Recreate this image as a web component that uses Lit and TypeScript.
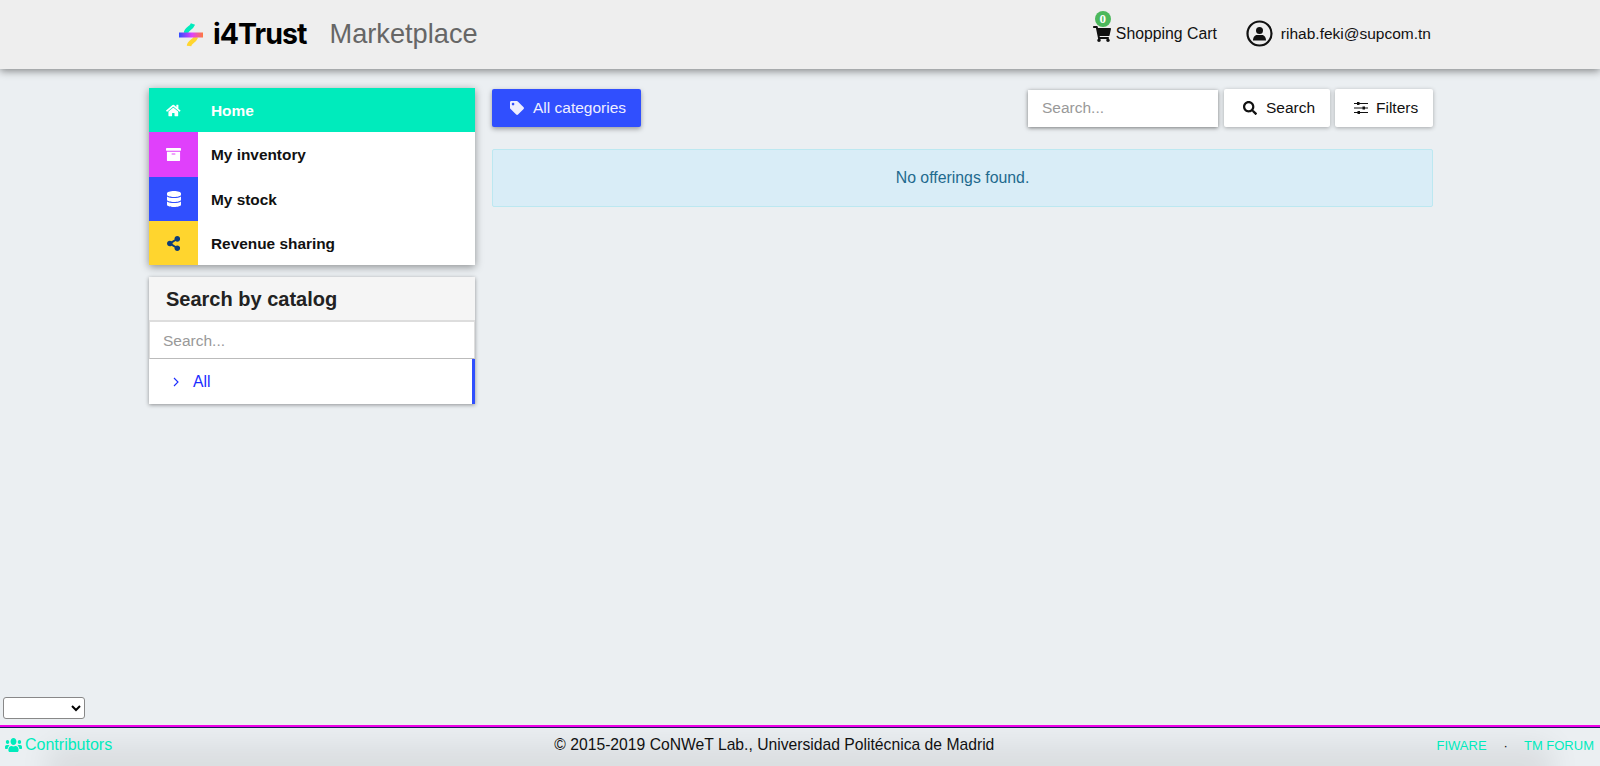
import { LitElement, html, css, svg } from 'lit';
import { customElement } from 'lit/decorators.js';

// font awesome shapes, drawn inline
const icon = (w: number, d: string, cls = "") => html`<svg class="icon ${cls}" viewBox="0 0 ${w} 512"><path fill="currentColor" d="${d}"></path></svg>`;

const HOME = "M280.37 148.26L96 300.11V464a16 16 0 0 0 16 16l112.06-.29a16 16 0 0 0 15.92-16V368a16 16 0 0 1 16-16h64a16 16 0 0 1 16 16v95.64a16 16 0 0 0 16 16.05L464 480a16 16 0 0 0 16-16V300L295.67 148.26a12.19 12.19 0 0 0-15.3 0zM571.6 251.47L488 182.56V44.05a12 12 0 0 0-12-12h-56a12 12 0 0 0-12 12v72.61L318.47 43a48 48 0 0 0-61 0L4.34 251.47a12 12 0 0 0-1.6 16.9l25.5 31A12 12 0 0 0 45.15 301l235.22-193.74a12.19 12.19 0 0 1 15.3 0L530.9 301a12 12 0 0 0 16.9-1.6l25.5-31a12 12 0 0 0-1.7-16.93z";
const ARCHIVE = "M32 448c0 17.7 14.3 32 32 32h384c17.7 0 32-14.3 32-32V160H32v288zm160-212c0-6.6 5.4-12 12-12h104c6.6 0 12 5.4 12 12v8c0 6.6-5.4 12-12 12H204c-6.6 0-12-5.4-12-12v-8zM480 32H32C14.3 32 0 46.3 0 64v48c0 8.8 7.2 16 16 16h480c8.8 0 16-7.2 16-16V64c0-17.7-14.3-32-32-32z";
const DATABASE = "M448 73.143v45.714C448 159.143 347.667 192 224 192S0 159.143 0 118.857V73.143C0 32.857 100.333 0 224 0s224 32.857 224 73.143zM448 176v102.857C448 319.143 347.667 352 224 352S0 319.143 0 278.857V176c48.125 33.143 136.208 48.572 224 48.572S399.874 209.143 448 176zm0 160v102.857C448 479.143 347.667 512 224 512S0 479.143 0 438.857V336c48.125 33.143 136.208 48.572 224 48.572S399.874 369.143 448 336z";
const SHARE = "M352 320c-22.608 0-43.387 7.819-59.79 20.895l-102.486-64.054a96.551 96.551 0 0 0 0-41.683l102.486-64.054C308.613 184.181 329.392 192 352 192c53.019 0 96-42.981 96-96S405.019 0 352 0s-96 42.981-96 96c0 7.158.79 14.13 2.276 20.841L155.79 180.895C139.387 167.819 118.608 160 96 160c-53.019 0-96 42.981-96 96s42.981 96 96 96c22.608 0 43.387-7.819 59.79-20.895l102.486 64.054A96.301 96.301 0 0 0 256 416c0 53.019 42.981 96 96 96s96-42.981 96-96-42.981-96-96-96z";
const TAG = "M0 252.118V48C0 21.49 21.49 0 48 0h204.118a48 48 0 0 1 33.941 14.059l211.882 211.882c18.745 18.745 18.745 49.137 0 67.882L293.823 497.941c-18.745 18.745-49.137 18.745-67.882 0L14.059 286.059A48 48 0 0 1 0 252.118zM112 64c-26.51 0-48 21.49-48 48s21.49 48 48 48 48-21.49 48-48-21.49-48-48-48z";
const SEARCH = "M505 442.7L405.3 343c-4.5-4.5-10.6-7-17-7H372c27.6-35.3 44-79.7 44-128C416 93.1 322.9 0 208 0S0 93.1 0 208s93.1 208 208 208c48.3 0 92.7-16.4 128-44v16.3c0 6.4 2.5 12.5 7 17l99.7 99.7c9.4 9.4 24.6 9.4 33.9 0l28.3-28.3c9.4-9.4 9.4-24.6.1-34zM208 336c-70.7 0-128-57.2-128-128 0-70.7 57.2-128 128-128 70.7 0 128 57.2 128 128 0 70.7-57.2 128-128 128z";
const CART = "M528.12 301.319l47.273-208C578.806 78.301 567.391 64 551.99 64H159.208l-9.166-44.81C147.758 8.021 137.93 0 126.529 0H24C10.745 0 0 10.745 0 24v16c0 13.255 10.745 24 24 24h69.883l70.248 343.435C147.325 417.1 136 435.222 136 456c0 30.928 25.072 56 56 56s56-25.072 56-56c0-15.674-6.447-29.835-16.824-40h209.647C430.447 426.165 424 440.326 424 456c0 30.928 25.072 56 56 56s56-25.072 56-56c0-22.172-12.888-41.332-31.579-50.405l5.517-24.276c3.413-15.018-8.002-29.319-23.403-29.319H218.117l-6.545-32h293.145c11.206 0 20.92-7.754 23.403-18.681z";
const USERS = "M96 224c35.3 0 64-28.7 64-64s-28.7-64-64-64-64 28.7-64 64 28.7 64 64 64zm448 0c35.3 0 64-28.7 64-64s-28.7-64-64-64-64 28.7-64 64 28.7 64 64 64zm32 32h-64c-17.6 0-33.5 7.1-45.1 18.6 40.3 22.1 68.9 62 75.1 109.4h66c17.7 0 32-14.3 32-32v-32c0-35.3-28.7-64-64-64zm-256 0c61.9 0 112-50.1 112-112S381.9 32 320 32 208 82.1 208 144s50.1 112 112 112zm76.8 32h-8.3c-20.8 10-43.9 16-68.5 16s-47.6-6-68.5-16h-8.3C179.6 288 128 339.6 128 403.2V432c0 26.5 21.5 48 48 48h288c26.5 0 48-21.5 48-48v-28.8c0-63.6-51.6-115.2-115.2-115.2zm-223.7-13.4C161.5 263.1 145.6 256 128 256H64c-35.3 0-64 28.7-64 64v32c0 17.7 14.3 32 32 32h65.9c6.3-47.4 34.9-87.3 75.2-109.4z";

const logo = html`<svg class="logo" viewBox="0 0 26 26">
  <defs>
    <linearGradient id="bar" x1="0" x2="1" y1="0" y2="0">
      <stop offset="0" stop-color="#2f4dff"></stop>
      <stop offset="0.55" stop-color="#e040fb"></stop>
      <stop offset="1" stop-color="#ff7a3c"></stop>
    </linearGradient>
  </defs>
  ${svg`<path d="M8 11 C8.5 6 13 7 15 2" fill="none" stroke="#00ebbc" stroke-width="4.5" stroke-linecap="butt"></path>
  <path d="M11 24 C11.5 19 16 20 18 15" fill="none" stroke="#ffd52e" stroke-width="4.5" stroke-linecap="butt"></path>
  <rect x="1" y="10.5" width="24" height="5" fill="url(#bar)"></rect>`}
</svg>`;

@customElement('app-root')
export default class AppRoot extends LitElement {

    static styles = css`
    :host{
        display: flex;
        flex-direction: column;
        height: 766px;
        overflow: hidden;
        background-color: #ebeff2;
        font-family: "Liberation Sans", Arial, sans-serif;
        color: #000;
    }
    .icon{
        display: block;
        height: 1em;
        flex: none;
    }

    .header{
        flex: none;
        height: 69px;
        box-sizing: border-box;
        background-color: #eee;
        box-shadow: 0 2px 8px rgba(0,0,0,.45);
        display: flex;
        align-items: center;
        padding: 0 169px 2px 178px;
        position: relative;
    }
    .logo{
        width: 26px;
        height: 26px;
        margin: 2px 9px 0 0;
    }
    .brand{
        font-family: Inter, "Liberation Sans", sans-serif;
        font-size: 28.5px;
        font-weight: 700;
        letter-spacing: -.95px;
        margin-right: 23px;
    }
    .title{
        font-size: 27.2px;
        color: #666;
    }
    .header__right{
        margin-left: auto;
        display: flex;
        align-items: center;
        font-size: 15.5px;
        color: #111;
    }
    .cart{
        display: flex;
        align-items: center;
        position: relative;
        margin-right: 29px;
        font-size: 15.8px;
    }
    .cart .icon{
        font-size: 16px;
        margin-right: 5px;
    }
    .badge{
        position: absolute;
        left: 2px;
        top: -14px;
        width: 16px;
        height: 16px;
        border-radius: 50%;
        background-color: #4cb85c;
        color: #fff;
        font: bold 13px/16px "Liberation Serif", serif;
        text-align: center;
    }
    .user{
        display: flex;
        align-items: center;
        gap: 8px;
    }
    .user svg{
        width: 27px;
        height: 27px;
    }

    .main{
        flex: 1;
        min-height: 0;
        display: flex;
        gap: 17px;
        width: 1284px;
        padding-top: 19px;
        margin-left: 149px;
    }
    .side{
        flex: none;
        width: 326px;
    }
    .menu{
        background-color: #fff;
        box-shadow: 0 2px 8px rgba(0,0,0,.4);
        margin-bottom: 12px;
    }
    .menu__row{
        display: flex;
        align-items: center;
        height: 44.33px;
        font-size: 15.4px;
        font-weight: 700;
        color: #111;
    }
    .menu__row.active{
        background-color: #00ebbc;
        color: #fff;
    }
    .menu__label{
        padding-top: 2px;
    }
    .menu__icon{
        flex: none;
        width: 49px;
        height: 100%;
        display: flex;
        align-items: center;
        justify-content: center;
        margin-right: 13px;
        font-size: 15px;
        color: #fff;
    }
    .home{ background-color: #00ebbc; font-size: 13px; }
    .inventory{ background-color: #e040fb; }
    .stock{ background-color: #304ffe; font-size: 16px; }
    .revenue{ background-color: #ffd52e; color: #0d3c78; }

    .catalog{
        background-color: #fff;
        box-shadow: 0 1px 4px rgba(0,0,0,.4);
    }
    .catalog__title{
        height: 44px;
        box-sizing: border-box;
        padding: 2px 0 0 17px;
        display: flex;
        align-items: center;
        background-color: #f5f5f5;
        border-bottom: 1px solid #ddd;
        font-size: 20px;
        font-weight: 700;
        color: #222;
    }
    .catalog__search{
        display: block;
        width: 100%;
        height: 38px;
        box-sizing: border-box;
        padding: 2px 13px 0;
        border: 1px solid #ddd;
        border-bottom-color: #bbb;
        background: #fff;
        font: 15.5px "Liberation Sans", sans-serif;
        outline: none;
    }
    input::placeholder{
        color: #999;
        opacity: 1;
    }
    .catalog__item{
        height: 45px;
        display: flex;
        align-items: center;
        padding-left: 24px;
        gap: 14px;
        border-right: 3px solid #304ffe;
        font-size: 15.7px;
        color: #1a2cff;
    }
    .catalog__item svg{
        width: 6px;
        height: 10px;
    }

    .content{
        flex: 1;
        min-width: 0;
    }
    .toolbar{
        display: flex;
        align-items: center;
        height: 38px;
        margin: 1px 0 22px;
    }
    .btn{
        display: flex;
        align-items: center;
        height: 38px;
        box-sizing: border-box;
        padding-bottom: 1px;
        border-radius: 2px;
        background-color: #fff;
        color: #111;
        font-size: 15.5px;
        box-shadow: 0 1px 4px rgba(0,0,0,.3);
    }
    .btn .icon{
        font-size: 14px;
    }
    .btn--primary{
        width: 149px;
        padding-left: 18px;
        gap: 9px;
        background-color: #304ffe;
        color: #eef;
        box-shadow: 0 2px 5px rgba(0,0,0,.35);
    }
    .btn--search{
        width: 106px;
        margin-left: 6px;
        padding-left: 19px;
        gap: 9px;
    }
    .btn--filters{
        width: 98px;
        margin-left: 5px;
        padding-left: 19px;
        gap: 8px;
    }
    .toolbar__search{
        margin-left: auto;
        width: 190px;
        height: 37px;
        box-sizing: border-box;
        padding: 0 14px 1px;
        border: 0;
        background: #fff;
        font: 15.5px "Liberation Sans", sans-serif;
        box-shadow: 0 1px 4px rgba(0,0,0,.5);
        outline: none;
    }
    .alert{
        height: 58px;
        box-sizing: border-box;
        padding-bottom: 1px;
        display: flex;
        align-items: center;
        justify-content: center;
        background-color: #d9edf7;
        border: 1px solid #bce8f1;
        border-radius: 2px;
        color: #1f6a8e;
        font-size: 15.85px;
    }

    .lang{
        flex: none;
        display: block;
        width: 82px;
        height: 22px;
        margin: 0 0 6px 3px;
        background-color: #fff;
        border: 1px solid #888;
        border-radius: 3px;
    }
    .footer{
        flex: none;
        height: 41px;
        box-sizing: border-box;
        border-top: 2px solid #f000e8;
        box-shadow: inset 0 1px 0 #14145a;
        padding: 0 6px 3px 5px;
        display: flex;
        align-items: center;
        justify-content: space-between;
        position: relative;
        overflow: hidden;
        font-size: 15.7px;
        color: #111;
    }
    .footer::after{
        content: "";
        position: absolute;
        left: 70px;
        right: 70px;
        bottom: -10px;
        height: 10px;
        box-shadow: 0 0 30px 22px rgba(0,0,0,.075);
    }
    .footer > *{
        position: relative;
        z-index: 1;
    }
    .footer a{
        color: #00ebbc;
        text-decoration: none;
    }
    .footer__left{
        display: flex;
        align-items: center;
        gap: 3px;
        font-size: 16px;
    }
    .footer__left svg{
        width: 17px;
        height: 16px;
    }
    .footer__right{
        display: flex;
        align-items: center;
        font-size: 13px;
    }
    .footer__right span{
        margin: 0 16px 0 17px;
        color: #111;
    }
    `;

    render() {
        return html`
          <div class="header">
            ${logo}
            <span class="brand">i4Trust</span>
            <span class="title">Marketplace</span>
            <div class="header__right">
              <div class="cart">
                ${icon(576, CART)}
                <span class="badge">0</span>
                <span>Shopping Cart</span>
              </div>
              <div class="user">
                <svg viewBox="0 0 27 27">
                  <circle cx="13.5" cy="13.5" r="12" fill="none" stroke="#111" stroke-width="2.2"></circle>
                  <circle cx="13.5" cy="10.5" r="3.5" fill="#111"></circle>
                  <path d="M7 20.5c0-4 2.5-5.5 4-5.5h5c1.5 0 4 1.5 4 5.5z" fill="#111"></path>
                </svg>
                <span>rihab.feki@supcom.tn</span>
              </div>
            </div>
          </div>

          <div class="main">
            <div class="side">
              <div class="menu">
                <div class="menu__row active"><div class="menu__icon home">${icon(576, HOME)}</div><span class="menu__label">Home</span></div>
                <div class="menu__row"><div class="menu__icon inventory">${icon(512, ARCHIVE)}</div><span class="menu__label">My inventory</span></div>
                <div class="menu__row"><div class="menu__icon stock">${icon(448, DATABASE)}</div><span class="menu__label">My stock</span></div>
                <div class="menu__row"><div class="menu__icon revenue">${icon(448, SHARE)}</div><span class="menu__label">Revenue sharing</span></div>
              </div>
              <div class="catalog">
                <div class="catalog__title">Search by catalog</div>
                <input class="catalog__search" placeholder="Search...">
                <div class="catalog__item">
                  <svg viewBox="0 0 6 10"><path d="M1 1l4 4-4 4" fill="none" stroke="currentColor" stroke-width="1.1"></path></svg>
                  All
                </div>
              </div>
            </div>

            <div class="content">
              <div class="toolbar">
                <div class="btn btn--primary">${icon(512, TAG)}All categories</div>
                <input class="toolbar__search" placeholder="Search...">
                <div class="btn btn--search">${icon(512, SEARCH)}Search</div>
                <div class="btn btn--filters">
                  <svg width="14" height="14" viewBox="0 0 14 14">
                    <path d="M0 2.5h14M0 7h14M0 11.5h14" stroke="#111" stroke-width="1"></path>
                    <rect x="3" y="1" width="2.5" height="3" fill="#111"></rect>
                    <rect x="8.5" y="5.5" width="2.5" height="3" fill="#111"></rect>
                    <rect x="3.5" y="10" width="2.5" height="3" fill="#111"></rect>
                  </svg>
                  Filters
                </div>
              </div>
              <div class="alert">No offerings found.</div>
            </div>
          </div>

          <select class="lang"><option></option></select>
          <div class="footer">
            <a class="footer__left" href="#"><svg viewBox="0 0 640 512" preserveAspectRatio="none"><path fill="currentColor" d="${USERS}"></path></svg>Contributors</a>
            <div>© 2015-2019 CoNWeT Lab., Universidad Politécnica de Madrid</div>
            <div class="footer__right"><a href="#">FIWARE</a><span>·</span><a href="#">TM FORUM</a></div>
          </div>
        `;
    }
}
